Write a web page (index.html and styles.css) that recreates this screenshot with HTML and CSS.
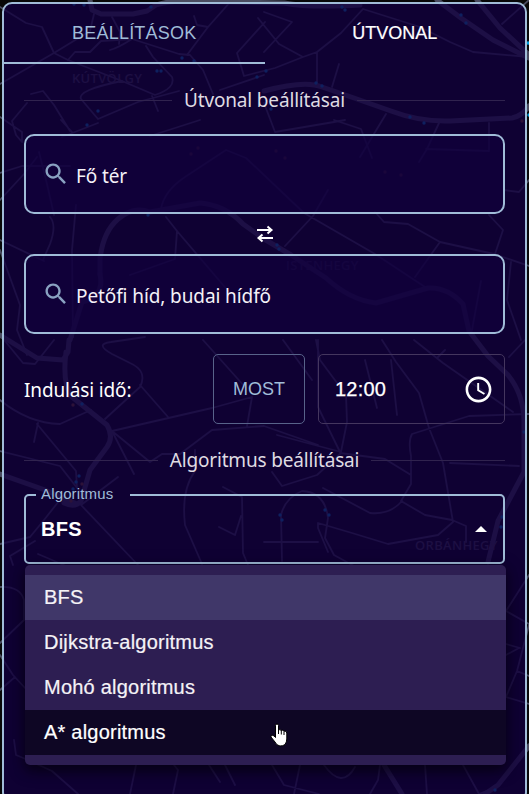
FILE: index.html
```
<!DOCTYPE html>
<html lang="hu">
<head>
<meta charset="utf-8">
<title>Útvonaltervező</title>
<link rel="stylesheet" href="styles.css">
</head>
<body>
<svg class="map" width="529" height="794" viewBox="0 0 529 794" aria-hidden="true">
  <g class="wide">
    <path d="M90 0L92 10L101 14L133 14L147 11L156 5Q168 1 185 1L284 3Q310 8 360 5"/>
    <path d="M437 0L461 18L493 40L529 58M477 0L500 28L529 55"/>
    <path d="M264 91Q305 80 322 87L354 98L391 111Q420 122 450 121L512 118Q522 116 529 106"/>
    <path d="M100 274V259Q103 232 118 219T150 212L200 203Q225 205 243 224L264 239L291 255L326 278Q350 300 376 303L428 288Q448 287 463 304L469 331L488 356L508 375Q524 395 524 422V472L498 521L488 562"/>
    <path d="M0 335L37 358L63 360L68 352L69 340M66 352Q62 384 72 397L107 425Q114 437 107 447L90 470L81 501Q75 508 64 503M0 474L45 490L77 504"/>
    <path d="M100 274Q105 297 82 302L70 340"/>
    <path d="M384 765L402 794M529 746L498 785L485 794"/>
  </g>
  <g class="streets">
    <path d="M0 7L26 23L42 27L54 53L68 60L122 81L155 95Q176 88 172 77L153 57L146 46M0 84L54 53L90 31L94 14"/>
    <path d="M122 81Q77 90 81 99L98 119L138 102L179 91M152 96L158 111M68 60L75 52H90L101 41L132 39L179 54L190 55L203 70L213 94M112 17L120 32L119 44M132 39Q118 48 110 50M194 16L197 25L208 27L187 55M232 0L208 27M265 22L237 53L244 76L275 68L303 57M264 12L292 22L264 52M258 18L279 44L303 57L317 52L341 33L363 9L420 27L450 42L473 52L529 57M317 52V85M339 64L332 87M220 90L264 75M529 0L502 24"/>
    <path d="M31 94L43 91L54 105L70 131M27 103L12 121L16 135L22 142V132L0 117M61 120L72 132M62 137L98 123M150 136L200 120M264 103L275 132L334 122L345 120M386 114L360 157M439 123L427 149L419 162M489 123V151L426 149"/>
    <path d="M0 173L22 166H70M0 200L24 174L37 157M39 152L47 184L54 215M76 205L72 250L73 337M50 217Q57 225 50 244L43 260M0 240L44 261M0 250L20 305L17 330L27 355M166 217L177 231L235 299M177 231L175 259L130 275M161 209Q164 191 185 177L226 150L246 158L304 213L375 254L425 287M285 246L313 216L328 190M334 120L361 129L372 158M375 212L384 222L408 224L440 242L494 254L529 266M440 242L415 277M489 215L503 230L495 254M504 190L519 192L529 180M511 262L507 300L521 340M481 281L472 330"/>
    <path d="M5 341L23 363L35 364L54 340M0 400Q28 423 60 424L91 410M105 419L140 387Q148 371 130 363L112 354Q94 344 111 342L145 337M140 385L168 417M112 431L212 408L252 397M112 431L150 462L162 454H180L212 430L264 426L318 445M112 431L134 474M203 340L245 387M252 397L247 426M283 340L312 380M318 340V407L340 452M316 340L320 360L346 395L347 422L341 452L277 435M38 423L34 442M37 424L76 471L77 488M0 451L60 466L81 493M118 477L81 505L138 565M0 544L30 537L44 520L59 501M13 565L10 556L35 541M38 554L66 566"/>
    <path d="M382 340L396 362L419 393L429 428L443 463L453 522L438 535L388 544L352 533L318 523V528L328 552M391 360L397 415M365 360L377 408M414 340L443 363L513 412M529 414L469 416L412 434Q408 441 411 456V484L401 501L425 515L452 520L466 526V542M411 475L385 459L340 453M450 463L519 466M323 488L370 513Q390 515 402 501M282 561L281 515Q285 498 302 491Q325 492 328 518L325 538L334 555L354 566M264 542L280 542H318M272 472L282 486L317 475L341 453M195 450V471Q181 490 185 525L202 564M223 487L242 497L243 553L248 565M219 527L235 535L241 516M445 350L437 358M509 357L525 340M0 587Q20 586 24 600V620L0 643M0 655L13 675L25 688M0 690L15 677M529 575L506 611L529 624M506 644L520 648M506 655L519 648M529 625L517 671L506 697L529 704M517 671L529 676"/>
    <path d="M14 740L16 755L28 760L52 771L78 794M136 765L130 794M174 765L178 770L173 794M209 765L220 782M225 765L235 785M272 765L284 785L319 794M324 765Q342 790 355 767M300 765L294 794M380 765L378 780L370 794M425 765L427 794M463 765L479 794L489 790"/>
  </g>
  <g class="places"><text x="72" y="83">KÚTVÖLGY</text><text x="286" y="270">ISTENHEGY</text><text x="415" y="550">ORBÁNHEGY</text></g>
  <path class="stops" d="M84 5h0M74 4h0M151 7h0M182 58h0M194 61h0M157 71h0M161 71h0M257 77h0M98 111h0M87 125h0M342 7h0M345 10h0M461 15h0M466 23h0M266 71h0M316 83h0M322 86h0M410 117h0M424 123h0M271 109h0M148 215h0M277 245h0M279 249h0M529 115h0M528 43h0M82 404h0M79 396h0M79 476h0M76 482h0M73 489h0M280 515h0M282 520h0M325 510h0M329 515h0M502 517h0M501 527h0M524 432h0M495 790h0"/>
  <path class="stops orange" d="M522 121h0M73 405h0M68 396h0M82 484h0M71 501h0M198 148h0M191 154h0M276 151h0M285 158h0M385 172h0M401 175h0"/>
</svg>
<main class="panel">
  <nav class="tabs">
    <button class="tab active"><span>BEÁLLÍTÁSOK</span></button>
    <button class="tab"><span>ÚTVONAL</span></button>
  </nav>
  <div class="body">
    <h2 class="divider"><span>Útvonal beállításai</span></h2>
    <div class="search">
      <svg viewBox="0 0 24 24"><path d="M15.5 14h-.79l-.28-.27C15.41 12.59 16 11.11 16 9.5 16 5.91 13.09 3 9.5 3S3 5.91 3 9.5 5.91 16 9.5 16c1.61 0 3.09-.59 4.23-1.57l.27.28v.79l5 4.99L20.49 19l-4.99-5zm-6 0C7.01 14 5 11.99 5 9.5S7.01 5 9.5 5 14 7.01 14 9.5 11.99 14 9.5 14z"/></svg>
      <span>Fő tér</span>
    </div>
    <div class="swap"><svg width="18" height="18" viewBox="0 0 18 18"><path d="M1 5H15.500M11.500 1.500L15.500 5L11.500 8.500M17 13H2.500M6.500 9.500L2.500 13L6.500 16.500"/></svg></div>
    <div class="search">
      <svg viewBox="0 0 24 24"><path d="M15.5 14h-.79l-.28-.27C15.41 12.59 16 11.11 16 9.5 16 5.91 13.09 3 9.5 3S3 5.91 3 9.5 5.91 16 9.5 16c1.61 0 3.09-.59 4.23-1.57l.27.28v.79l5 4.99L20.49 19l-4.99-5zm-6 0C7.01 14 5 11.99 5 9.5S7.01 5 9.5 5 14 7.01 14 9.5 11.99 14 9.5 14z"/></svg>
      <span>Petőfi híd, budai hídfő</span>
    </div>
    <div class="departure">
      <span class="label">Indulási idő:</span>
      <button class="now">MOST</button>
      <div class="time"><span>12:00</span>
        <svg width="31" height="31" viewBox="0 0 24 24"><path d="M11.99 2C6.47 2 2 6.48 2 12s4.47 10 9.99 10C17.52 22 22 17.52 22 12S17.52 2 11.99 2zM12 20c-4.42 0-8-3.58-8-8s3.58-8 8-8 8 3.58 8 8-3.58 8-8 8zm.5-13H11v6l5.25 3.15.75-1.23-4.5-2.67z"/></svg>
      </div>
    </div>
    <h2 class="divider second"><span>Algoritmus beállításai</span></h2>
    <fieldset class="select">
      <legend>Algoritmus</legend>
      <div class="value"><span>BFS</span><i class="caret"></i></div>
    </fieldset>
    <ul class="menu">
      <li class="selected">BFS</li>
      <li>Dijkstra-algoritmus</li>
      <li>Mohó algoritmus</li>
      <li class="hover">A* algoritmus</li>
    </ul>
  </div>
</main>
<svg class="cursor" width="18" height="24" viewBox="0 0 18 24" aria-hidden="true"><path d="M5.500 2.500Q5.500 1 7 1T8.500 2.500V7Q10 6 11.200 7.500Q13 6.500 14 8.200Q16.500 7.500 16.800 10V16Q16.800 19 15 21.500Q13 23 10 23Q6.500 22.500 5 19L1 14Q.5 12.500 2 12Q4 12.500 5.500 14.500Z"/><path class="fingers" d="M8.500 7V11M11.300 7.500V11.500M14 8.500V12"/></svg>
</body>
</html>
```
FILE: styles.css
```
* { box-sizing: border-box; }
body { margin: 0; width: 529px; height: 794px; overflow: hidden; position: relative; background: #080808; color: #fff; font-family: "Liberation Sans", Arial, sans-serif; }
button { font: inherit; background: none; border: 0; padding: 0; color: inherit; }
.map { position: absolute; inset: 0; }
.map path { fill: none; stroke: #4a4c60; stroke-width: 1.8; stroke-linejoin: round; stroke-linecap: round; }
.map .wide path { stroke-width: 5; }
.map .stops { stroke: #009ee0; stroke-width: 3.4; }
.map .stops.orange { stroke: #9c5a20; }
.places { fill: #4a4a54; font: 600 13px "Open Sans", sans-serif; letter-spacing: .3px; }
.panel { position: relative; margin: 2px 2px 0; height: 800px; border: 2px solid #a0bcd8; border-radius: 10px; background: rgba(17, 0, 62, .8); }
.tabs { display: flex; height: 60px; }
.tab { flex: 1; font-size: 18px; padding-bottom: 1px; -webkit-text-stroke: .2px; }
.tab.active { color: #a0bcd8; border-bottom: 2px solid #a0bcd8; padding-top: 1px; letter-spacing: .2px; -webkit-text-stroke: 0; }
.body { padding: 21px 20px 0; }
.divider { display: flex; align-items: center; gap: 12px; margin: 0; height: 30px; font: 400 19px/30px "Noto Sans", sans-serif; color: #dfdbe2; white-space: nowrap; }
.divider::before, .divider::after { content: ""; flex: 1; height: 1px; background: #30234e; }
.divider span { letter-spacing: -.17px; }
.search { height: 80px; margin-top: 19px; padding: 3px 18px 0; display: flex; align-items: center; border: 2px solid #a0bcd8; border-radius: 10px; background: rgba(17, 0, 62, .65); font: 19px "Noto Sans", sans-serif; letter-spacing: -.1px; color: #f4f1f7; }
.search svg { width: 28px; height: 28px; margin: -3px 6px 0 -2px; fill: #8aa2c2; }
.swap { height: 40px; display: flex; align-items: center; justify-content: center; }
.swap + .search { margin-top: 0; }
.swap svg path { fill: none; stroke: #fff; stroke-width: 2; }
.departure { display: flex; margin-top: 20px; height: 70px; align-items: center; }
.label { width: 189px; padding-top: 2px; font: 19px "Noto Sans", sans-serif; letter-spacing: -.15px; }
.now { width: 92px; height: 70px; border: 1px solid #58638a; border-radius: 5px; color: #a0bcd8; font-size: 18px; }
.time { width: 187px; height: 70px; margin-left: 13px; padding: 0 10px 0 16px; display: flex; align-items: center; justify-content: space-between; border: 1px solid #44365e; border-radius: 5px; font-size: 20px; letter-spacing: .2px; }
.time span { -webkit-text-stroke: .25px; }
.time svg { fill: #fff; }
.divider.second { margin-top: 21px; }
.select { margin: 11px 0 0; height: 78px; min-width: 0; padding: 0; border: 2px solid #a0bcd8; border-radius: 5px; }
.select legend { margin-left: 10px; width: 94px; padding: 0 5px; font-size: 15px; line-height: 16px; height: 18px; letter-spacing: .15px; color: #a0bcd8; }
.value { height: 50px; padding: 0 16px 0 15px; display: flex; align-items: center; justify-content: space-between; font-size: 20px; font-weight: 700; letter-spacing: .3px; }
.caret { border: 6.500px solid transparent; border-top: 0; border-bottom-color: #fff; }
.menu { position: absolute; left: 21px; top: 561px; width: 481px; height: 200px; margin: 0; padding: 10px 0; list-style: none; border-radius: 5px; background: #2d1e52; box-shadow: 0 6px 12px rgba(0, 0, 0, .4), 0 4px 18px rgba(0, 0, 0, .35); }
.menu li { height: 45px; padding-left: 19px; font-size: 20px; line-height: 44px; letter-spacing: .22px; color: #f5f3f7; -webkit-text-stroke: .2px; }
.menu .selected { background: #403769; }
.menu .hover { background: #0e0624; color: #fff; }
.cursor { position: absolute; left: 270px; top: 723px; }
.cursor path { fill: #fff; stroke: #000; stroke-width: 1; }
.cursor .fingers { fill: none; }
```
